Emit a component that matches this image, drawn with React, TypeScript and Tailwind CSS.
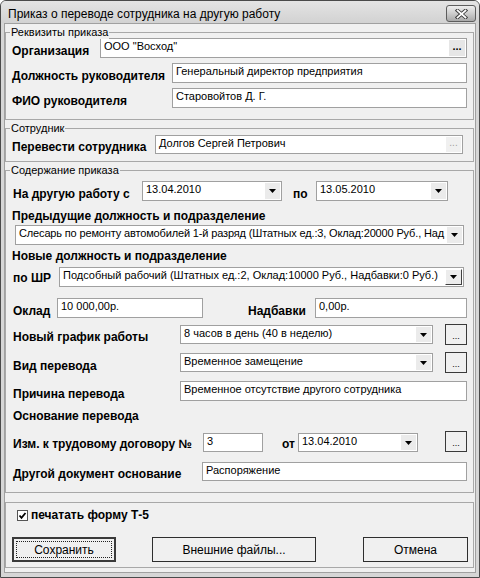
import React from "react";

function Label({ className = "", children }: { className?: string; children: React.ReactNode }) {
  return <span className={`text-[12px] font-bold leading-[14px] whitespace-nowrap shrink-0 ${className}`}>{children}</span>;
}

function TextBox({ className = "", children }: { className?: string; children?: React.ReactNode }) {
  return (
    <div className={`bg-white border border-[#a0a0a0] pl-[3px] pt-[1px] text-[11px] leading-[13px] whitespace-nowrap overflow-hidden shrink-0 ${className}`}>
      {children}
    </div>
  );
}

function Arrow() {
  return (
    <svg width="7" height="4" viewBox="0 0 7 4">
      <polygon points="0,0 7,0 3.5,4" fill="#000" />
    </svg>
  );
}

function Combo({
  className = "",
  textClassName = "",
  raised = false,
  children,
}: {
  className?: string;
  textClassName?: string;
  raised?: boolean;
  children: React.ReactNode;
}) {
  return (
    <div className={`bg-white border border-[#a0a0a0] flex items-stretch shrink-0 ${className}`}>
      <div className={`flex-1 pl-[3px] pt-[1px] text-[11px] leading-[13px] whitespace-nowrap overflow-hidden ${textClassName}`}>{children}</div>
      {raised ? (
        <div className="w-[17px] m-[1px] bg-[#ececec] border border-t-white border-l-white border-r-[#404040] border-b-[#404040] flex items-center justify-center">
          <Arrow />
        </div>
      ) : (
        <div className="w-[15px] m-[1px] bg-[#ebebeb] flex items-center justify-center">
          <Arrow />
        </div>
      )}
    </div>
  );
}

function DotsButton() {
  return (
    <div className="w-[22px] h-[21px] border border-[#3a3a3a] bg-[#f0f0f0] flex items-end justify-center pb-[3px] text-[9px] leading-[9px] shrink-0 self-center">
      ...
    </div>
  );
}

function Group({ className = "", legend, children }: { className?: string; legend?: string; children: React.ReactNode }) {
  return (
    <div className={`relative border border-[#a8a8a8] mr-[1px] shrink-0 ${className}`}>
      {legend && (
        <span className="absolute -top-[7px] left-[4px] px-[1px] bg-[#f0f0f0] text-[11px] leading-[13px]">{legend}</span>
      )}
      {children}
    </div>
  );
}

function CloseButton() {
  return (
    <div className="mt-[4px] w-[30px] h-[17px] rounded-[3px] border border-[#5d5d5d] bg-gradient-to-b from-[#eeeeee] via-[#cdcdcd] to-[#a9a9a9] flex items-center justify-center">
      <svg width="13" height="10" viewBox="0 0 13 10">
        <path d="M2.5 1.5 L10.5 8.5 M10.5 1.5 L2.5 8.5" stroke="#3c3c3c" strokeWidth="3.6" strokeLinecap="square" />
        <path d="M2.5 1.5 L10.5 8.5 M10.5 1.5 L2.5 8.5" stroke="#ffffff" strokeWidth="1.7" strokeLinecap="square" />
      </svg>
    </div>
  );
}

export default function App() {
  return (
    <div className="w-[480px] h-[578px] bg-[#d6d6d6] border border-[#4a4a4a] rounded-t-[6px] flex flex-col overflow-hidden text-black font-['Liberation_Sans',Arial,sans-serif]">
      {/* Title bar */}
      <div className="h-[22px] flex items-start justify-between pl-[7px] pr-[3px] bg-gradient-to-b from-[#e4e4e4] to-[#d2d2d2] shrink-0">
        <span className="text-[12px] leading-[14px] pt-[6px] whitespace-nowrap">Приказ о переводе сотрудника на другую работу</span>
        <CloseButton />
      </div>

      {/* Client area */}
      <div className="flex-1 mx-[3px] mb-[4px] bg-[#f0f0f0] border border-[#a0a0a0] flex flex-col pt-[8px]">
        {/* Реквизиты */}
        <Group legend="Реквизиты приказа" className="h-[88px] pt-[5px] pl-[6px]">
          <div className="flex flex-col gap-[5px]">
            <div className="flex items-end h-[20px]">
              <Label className="w-[88px]">Организация</Label>
              <div className="w-[367px] h-[20px] bg-white border border-[#a0a0a0] flex items-stretch">
                <div className="flex-1 pl-[3px] pt-[1px] text-[11px] leading-[13px] whitespace-nowrap">ООО "Восход"</div>
                <div className="w-[16px] m-[1px] bg-[#e6e6e6] flex items-center justify-center text-[11px] font-bold leading-[11px] pb-[3px]">...</div>
              </div>
            </div>
            <div className="flex items-end h-[20px]">
              <Label className="w-[160px]">Должность руководителя</Label>
              <TextBox className="w-[295px] h-[20px]">Генеральный директор предприятия</TextBox>
            </div>
            <div className="flex items-end h-[20px]">
              <Label className="w-[160px]">ФИО руководителя</Label>
              <TextBox className="w-[295px] h-[20px]">Старовойтов Д. Г.</TextBox>
            </div>
          </div>
        </Group>

        {/* Сотрудник */}
        <Group legend="Сотрудник" className="h-[34px] mt-[8px] pt-[6px] pl-[6px]">
          <div className="flex items-end h-[19px]">
            <Label className="w-[143px]">Перевести сотрудника</Label>
            <div className="w-[308px] h-[19px] bg-white border border-[#a0a0a0] flex items-stretch">
              <div className="flex-1 pl-[3px] pt-[1px] text-[11px] leading-[13px] whitespace-nowrap">Долгов Сергей Петрович</div>
              <div className="w-[15px] m-[1px] bg-[#f0f0f0] flex items-center justify-center text-[10px] leading-[10px] text-[#a0a0a0] pb-[3px]">...</div>
            </div>
          </div>
        </Group>

        {/* Содержание приказа */}
        <Group legend="Содержание приказа" className="h-[323px] mt-[8px] pt-[10px] pl-[6px] flex flex-col">
          <div className="flex items-end h-[20px]">
            <Label className="w-[130px] pl-[1px]">На другую работу с</Label>
            <Combo className="w-[140px] h-[20px]">13.04.2010</Combo>
            <Label className="w-[34px] pl-[11px]">по</Label>
            <Combo className="w-[132px] h-[20px]">13.05.2010</Combo>
          </div>

          <Label className="mt-[8px]">Предыдущие должность и подразделение</Label>
          <Combo className="w-[449px] h-[20px] mt-[2px] ml-[3px]" textClassName="tracking-[-0.15px]">
            Слесарь по ремонту автомобилей 1-й разряд (Штатных ед.:3, Оклад:20000 Руб., Над
          </Combo>

          <Label className="mt-[4px]">Новые должность и подразделение</Label>
          <div className="flex items-end h-[20px] mt-[4px]">
            <Label className="w-[47px] pl-[1px] mb-[2px]">по ШР</Label>
            <Combo raised className="w-[405px] h-[20px]">
              Подсобный рабочий (Штатных ед.:2, Оклад:10000 Руб., Надбавки:0 Руб.)
            </Combo>
          </div>

          <div className="flex items-end h-[20px] mt-[11px]">
            <Label className="w-[45px] pl-[1px]">Оклад</Label>
            <TextBox className="w-[146px] h-[20px]">10 000,00р.</TextBox>
            <Label className="w-[112px] pl-[45px]">Надбавки</Label>
            <TextBox className="w-[152px] h-[20px]">0,00р.</TextBox>
          </div>

          <div className="flex items-end h-[21px] mt-[6px]">
            <Label className="w-[168px] pl-[1px] mb-[1px]">Новый график работы</Label>
            <Combo className="w-[253px] h-[19px] self-center">8 часов в день (40 в неделю)</Combo>
            <div className="w-[12px]" />
            <DotsButton />
          </div>

          <div className="flex items-end h-[21px] mt-[7px]">
            <Label className="w-[168px] pl-[1px]">Вид перевода</Label>
            <Combo className="w-[253px] h-[19px] self-center">Временное замещение</Combo>
            <div className="w-[12px]" />
            <DotsButton />
          </div>

          <div className="flex items-end h-[20px] mt-[8px]">
            <Label className="w-[168px] pl-[1px]">Причина перевода</Label>
            <TextBox className="w-[287px] h-[20px]">Временное отсутствие другого сотрудника</TextBox>
          </div>

          <Label className="mt-[8px] pl-[1px]">Основание перевода</Label>

          <div className="flex items-end h-[22px] mt-[7px]">
            <Label className="w-[191px] pl-[1px] mb-[1px]">Изм. к трудовому договору №</Label>
            <TextBox className="w-[60px] h-[19px]">3</TextBox>
            <Label className="w-[35px] pl-[19px] mb-[1px]">от</Label>
            <Combo className="w-[120px] h-[19px]">13.04.2010</Combo>
            <div className="w-[27px]" />
            <DotsButton />
          </div>

          <div className="flex items-end h-[19px] mt-[10px]">
            <Label className="w-[190px] pl-[1px]">Другой документ основание</Label>
            <TextBox className="w-[265px] h-[19px]">Распоряжение</TextBox>
          </div>
        </Group>

        {/* Печать и кнопки */}
        <Group className="h-[66px] mt-[9px] pt-[6px] pl-[6px] flex flex-col">
          <div className="flex items-center h-[12px] ml-[5px]">
            <div className="w-[11px] h-[11px] border border-[#555] bg-white flex items-center justify-center">
              <svg width="9" height="9" viewBox="0 0 9 9">
                <path d="M1.5 4.5 L3.5 6.8 L7.5 2" stroke="#000" strokeWidth="1.8" fill="none" />
              </svg>
            </div>
            <Label className="ml-[3px]">печатать форму Т-5</Label>
          </div>
          <div className="flex mt-[16px] h-[25px] text-[12px]">
            <div className="w-[104px] h-[25px] border-2 border-[#3a3a3a] bg-[#f0f0f0] p-[2px]">
              <div className="w-full h-full border border-dotted border-[#222] flex items-center justify-center">Сохранить</div>
            </div>
            <div className="w-[164px] h-[25px] ml-[36px] border border-[#2e2e2e] bg-[#f0f0f0] flex items-center justify-center">
              Внешние файлы...
            </div>
            <div className="w-[105px] h-[25px] ml-[47px] border border-[#2e2e2e] bg-[#f0f0f0] flex items-center justify-center">
              Отмена
            </div>
          </div>
        </Group>
      </div>
    </div>
  );
}
